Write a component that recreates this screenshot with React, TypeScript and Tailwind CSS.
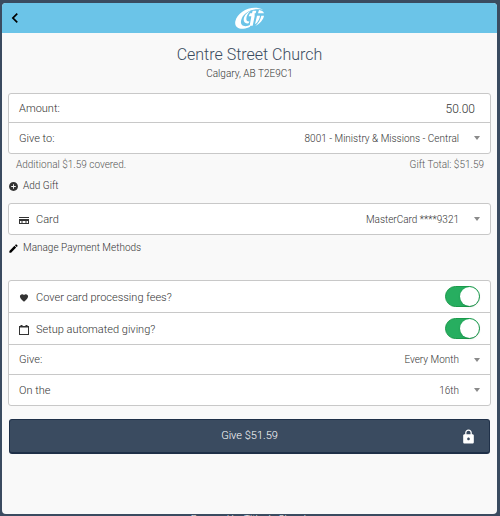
import React, { useState } from 'react';
import { IoMdAddCircle, IoMdHeart, IoMdLock } from 'react-icons/io';
import { MdChevronLeft, MdEdit } from 'react-icons/md';

const Logo = () => (
  <svg viewBox="0 0 90 66" className="h-[22px] w-[30px]" fill="#fff" aria-hidden="true">
    <path d="M84 8C50-8 8 14 1 43c-3 15 8 23 24 22 8-1 14-3 20-6l2-6c-8 4-16 6-22 3-8-3-9-12-5-21C28 16 54 2 84 8Z" />
    <path d="M46 12C34 18 26 28 26 38c0 8 6 12 15 11l2-6c-6 1-9-2-9-7 0-9 5-17 12-24Z" />
    <path d="M53 11h11l-2 8h-3v9l-6 28h-9l5-28h-8l4-9h6Z" />
    <path d="M72 9c8 1 13 4 15 10H69Z" />
    <path d="M66 26h9c-1 8-4 14-9 21l-6 5ZM79 26h8c-2 12-12 23-26 31 9-9 15-18 18-31Z" />
  </svg>
);

const CardIcon = () => (
  <svg viewBox="0 0 20 14" className="h-[7px] w-[10px]" fill="currentColor" aria-hidden="true">
    <path fillRule="evenodd" d="M0 0h20v14H0Zm0 2v2h20V2Zm2 6v4h16V8ZM4 9h4v2H4Zm8 0h4v2h-4Z" />
  </svg>
);

const CalendarIcon = () => (
  <svg viewBox="0 0 20 20" className="h-[10px] w-[10px]" fill="currentColor" aria-hidden="true">
    <path fillRule="evenodd" d="M3 0h4v2h6V0h4v2h3v18H0V2h3Zm-1 5v13h16V5Z" />
  </svg>
);

type SelectRowProps = {
  id: string;
  label: string;
  value: string;
  icon?: React.ReactNode;
};

const SelectRow = ({ id, label, value, icon }: SelectRowProps) => (
  <div className="flex h-[30px] items-center px-[10px]">
    <label htmlFor={id} className="flex shrink-0 items-center gap-[7px] pt-[2px] text-[11px]">
      {icon}
      {label}
    </label>
    <select id={id} className="min-w-0 flex-1 appearance-none bg-transparent text-right text-[10px] [text-align-last:right]">
      <option>{value}</option>
    </select>
    <svg viewBox="0 0 6 4" className="ml-[15px] h-[4px] w-[6px] text-[#8a8a8a]" fill="currentColor" aria-hidden="true">
      <path d="M0 0h6L3 4Z" />
    </svg>
  </div>
);

type ToggleRowProps = {
  id: string;
  label: string;
  icon: React.ReactNode;
};

const ToggleRow = ({ id, label, icon }: ToggleRowProps) => {
  const [on, setOn] = useState(true);

  return (
    <div className="flex h-8 items-center justify-between px-[10px]">
      <label htmlFor={id} className="flex items-center gap-[7px] pt-[3px] text-[11px]">
        {icon}
        {label}
      </label>
      <input
        id={id}
        type="checkbox"
        checked={on}
        onChange={() => setOn(!on)}
        className="flex h-[21px] w-[35px] appearance-none justify-end rounded-full border border-[#1a9a4a] bg-[#27ae60] before:h-[19px] before:w-[19px] before:rounded-full before:bg-white before:shadow not-checked:justify-start not-checked:border-gray-300 not-checked:bg-gray-300"
      />
    </div>
  );
};

const App = () => {
  return (
    <div className="flex h-screen flex-col overflow-hidden bg-[#3a4b60] px-[2px] pt-[3px] font-['Roboto',sans-serif] font-light text-[#333]">
      <div className="mr-px flex min-h-[511px] flex-1 shrink-0 flex-col rounded-sm bg-[#f9f9f9]">
        {/* Header */}
        <header className="grid h-[30px] shrink-0 grid-cols-3 items-center rounded-t-sm bg-[#6bc4e8]">
          <button type="button" aria-label="Back" className="ml-[3px] w-5 text-black">
            <MdChevronLeft className="h-5 w-5" />
          </button>
          <div className="flex justify-center">
            <Logo />
          </div>
        </header>

        <main className="flex flex-col px-[6px]">
          <div className="flex flex-col items-center pt-[12px] text-center">
            <h1 className="text-[16px] leading-5 text-[#3a4b60]">Centre Street Church</h1>
            <p className="pt-px text-[10px] leading-4">Calgary, AB T2E9C1</p>
          </div>

          {/* Gift */}
          <section className="mt-[11px] divide-y divide-[#c8c8c8] rounded-[3px] border border-[#c8c8c8] bg-white">
            <div className="flex h-[29px] items-center px-[10px] pt-[2px]">
              <label htmlFor="amount" className="text-[11px]">Amount:</label>
              <input id="amount" defaultValue="50.00" className="mr-[5px] ml-auto w-20 text-right text-[12px]" />
            </div>
            <SelectRow id="fund" label="Give to:" value="8001 - Ministry & Missions - Central" />
          </section>
          <div className="flex justify-between pt-[3px] pr-[7px] pl-[8px] text-[10px] leading-4 text-[#555]">
            <span>Additional $1.59 covered.</span>
            <span>Gift Total: $51.59</span>
          </div>
          <button type="button" className="mt-[5px] flex items-center gap-[4px] self-start text-[10px] leading-4">
            <IoMdAddCircle className="h-[11px] w-[11px]" />
            Add Gift
          </button>

          {/* Payment */}
          <section className="mt-[9px] rounded-[3px] border border-[#c8c8c8] bg-white">
            <SelectRow id="card" label="Card" value="MasterCard ****9321" icon={<CardIcon />} />
          </section>
          <a href="#payment-methods" className="mt-[5px] flex items-center gap-[4px] self-start text-[10px] leading-4">
            <MdEdit className="h-[11px] w-[11px] text-black" />
            Manage Payment Methods
          </a>

          {/* Schedule */}
          <section className="mt-[24px] divide-y divide-[#c8c8c8] rounded-[3px] border border-[#c8c8c8] bg-white">
            <ToggleRow id="fees" label="Cover card processing fees?" icon={<IoMdHeart className="h-[12px] w-[10px]" />} />
            <ToggleRow id="automated" label="Setup automated giving?" icon={<CalendarIcon />} />
            <SelectRow id="frequency" label="Give:" value="Every Month" />
            <SelectRow id="day" label="On the" value="16th" />
          </section>

          <button
            type="button"
            className="mx-px mt-[13px] grid h-[35px] grid-cols-[1fr_auto_1fr] items-center rounded-[3px] border border-b-2 border-[#1f3048] bg-[#3a4b60] text-[11px] text-white"
          >
            <span className="col-start-2">Give $51.59</span>
            <IoMdLock className="mr-[12px] h-[17px] w-[17px] justify-self-end" />
          </button>
        </main>
      </div>
      <footer className="shrink-0 text-center text-[10px] leading-3 text-white">Powered by Tithe.ly Church</footer>
    </div>
  );
};

export default App;
